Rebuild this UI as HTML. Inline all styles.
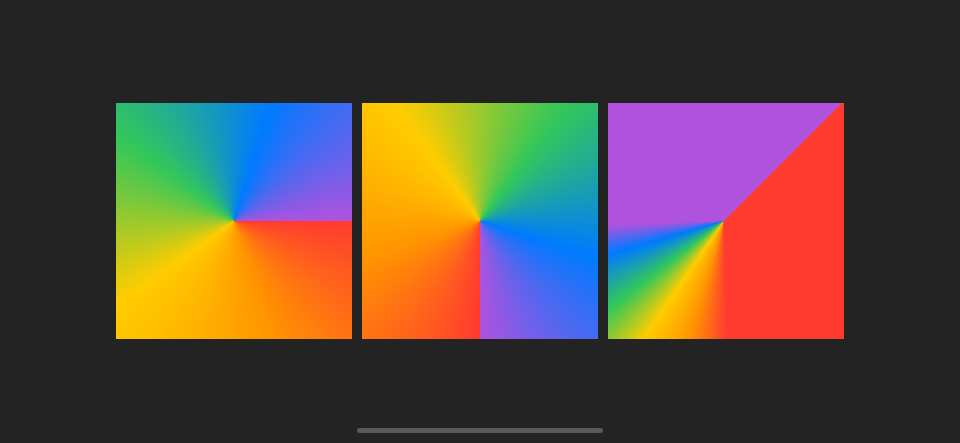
<!DOCTYPE html>
<html><head><meta charset="utf-8"><style>
html,body{margin:0;padding:0;background:#232323;width:960px;height:443px;overflow:hidden;position:relative}
.s{position:absolute;top:103px;width:236px;height:236px}
#a{left:116px;background:conic-gradient(from 90deg,#FF3B30,#FF9500,#FFCC00,#34C759,#007AFF,#AF52DE)}
#b{left:362px;background:conic-gradient(from 180deg,#FF3B30,#FF9500,#FFCC00,#34C759,#007AFF,#AF52DE)}
#c{left:608px;background:conic-gradient(from 45deg at 49% 50%,#FF3B30 0%,#FF3B30 37%,#FF9500 42%,#FFCC00 47%,#34C759 52%,#007AFF 58%,#AF52DE 62%,#AF52DE 100%)}
.bar{position:absolute;left:357px;top:428px;width:246px;height:5px;border-radius:3px;background:#5a5a5a}
</style></head><body>
<div class="s" id="a"></div><div class="s" id="b"></div><div class="s" id="c"></div>
<div class="bar"></div>
</body></html>
